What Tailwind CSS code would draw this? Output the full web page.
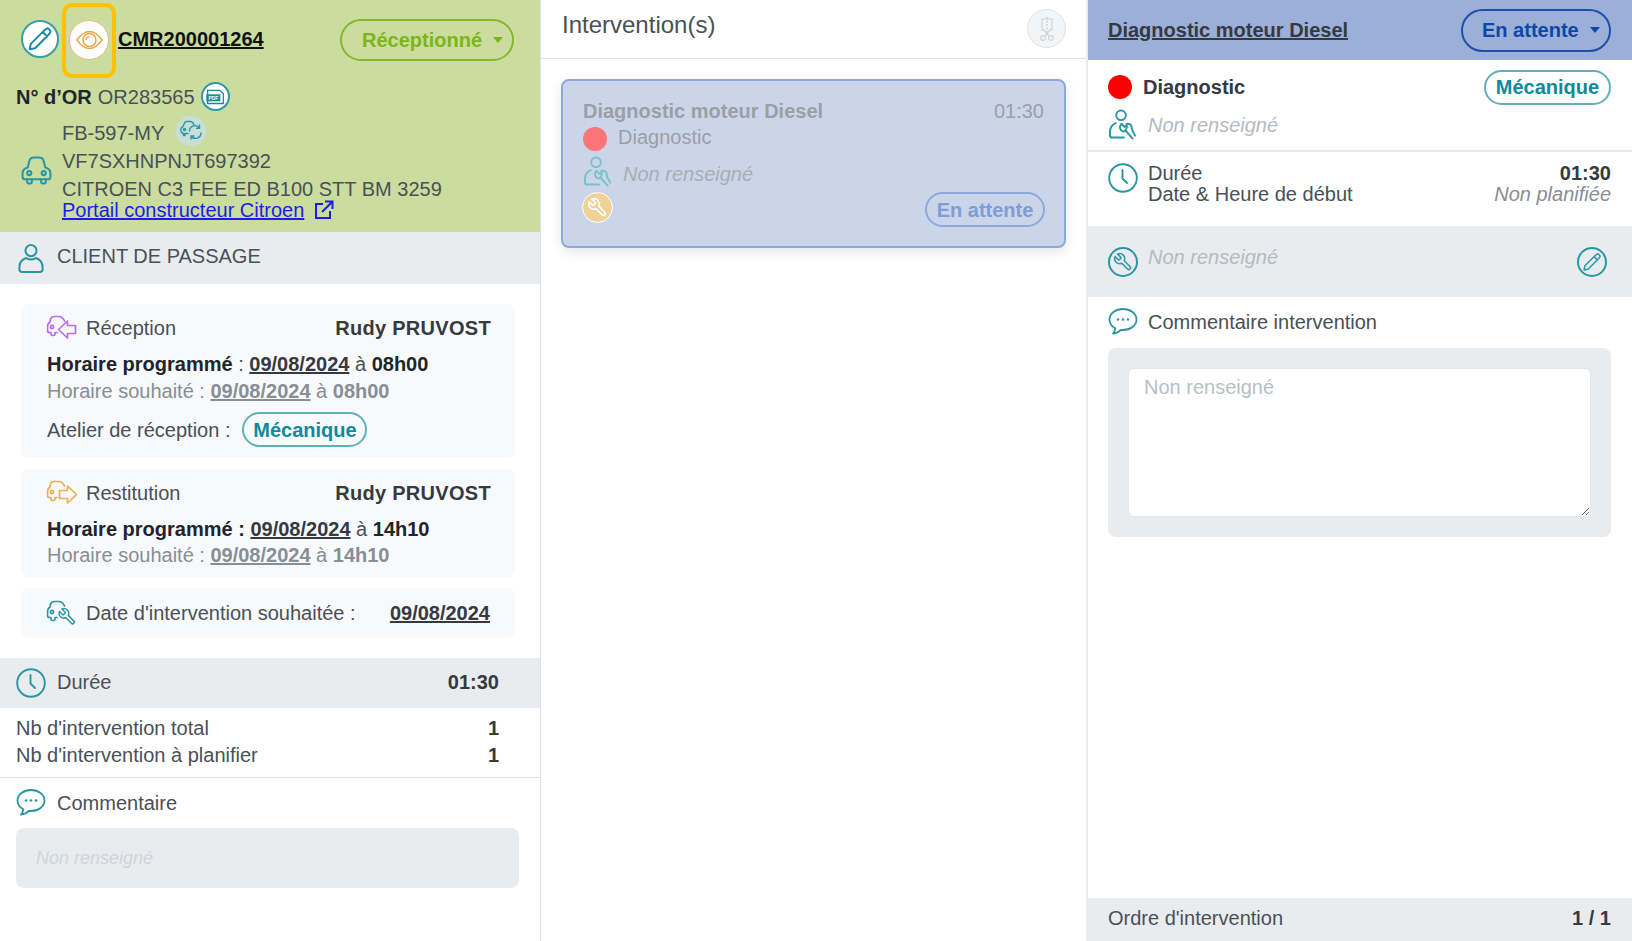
<!DOCTYPE html>
<html lang="fr">
<head>
<meta charset="utf-8">
<title>Intervention</title>
<script src="https://cdn.jsdelivr.net/npm/@tailwindcss/browser@4"></script>
</head>
<body class="bg-white font-['Liberation_Sans',Arial,sans-serif] text-[20px] text-[#495057]">

<!-- shared icons -->
<svg class="hidden">
  <symbol id="i-pencil" viewBox="0 0 24 24"><path d="M15.5 4.5 18 2.6a1.4 1.4 0 0 1 1.9.1l1.4 1.4a1.4 1.4 0 0 1 .1 1.9l-1.9 2.500L7.500 20.500 2.500 21.500l1-5ZM14.500 5.500l4 4" fill="none" stroke="currentColor" stroke-width="1.800" stroke-linejoin="round"/></symbol>
  <symbol id="i-wrench" viewBox="0 0 24 24"><g transform="translate(24 0) scale(-1 1)"><path d="M14.700 6.300a1 1 0 0 0 0 1.400l1.600 1.600a1 1 0 0 0 1.400 0l3.770-3.770a6 6 0 0 1-7.940 7.940l-6.910 6.910a2.120 2.120 0 0 1-3-3l6.910-6.910a6 6 0 0 1 7.940-7.940l-3.760 3.760z" fill="none" stroke="currentColor" stroke-width="1.800" stroke-linejoin="round"/></g></symbol>
  <symbol id="i-car" viewBox="0 0 30 30"><g fill="none" stroke="currentColor" stroke-width="2" stroke-linejoin="round" stroke-linecap="round"><path d="M6.500 12 8 6Q9 2.500 12.500 2.500h5Q21 2.500 22 6l1.500 6q5 1 5 6v3q0 2.500-2.500 2.500H4Q1.500 23.500 1.500 21v-3q0-5 5-6Z"/><path d="M6 23.500v2.500q0 1.500 1.500 1.500h1.500q1.500 0 1.500-1.500v-2.500M19.500 23.500v2.500q0 1.500 1.500 1.500h1.500q1.500 0 1.500-1.500v-2.500"/><circle cx="8" cy="17.500" r="2"/><circle cx="22" cy="17.500" r="2"/></g></symbol>
  <symbol id="i-person" viewBox="0 0 28 32"><g fill="none" stroke="currentColor" stroke-width="2.200"><circle cx="14" cy="7.500" r="6"/><path d="M9 15.500Q1.500 18 1.500 25.500v2q0 3 3 3h19q3 0 3-3v-2q0-7.500-7.500-10-5 3-10 0Z" stroke-linejoin="round"/></g></symbol>
  <symbol id="i-clock" viewBox="0 0 30 30"><g fill="none" stroke="currentColor" stroke-width="1.900" stroke-linecap="round"><circle cx="15" cy="15" r="13.800"/><path d="M14.500 7v8.500l4.500 4.500"/></g></symbol>
  <symbol id="i-comment" viewBox="0 0 30 30"><path d="M15 2C7.500 2 1.500 6.500 1.500 12.500c0 3.800 2.300 7 5.800 8.800-.2 2-1 3.800-2.300 5.200 3.200-.3 6-1.600 8-3.600.6.100 1.300.100 2 .100 7.500 0 13.500-4.700 13.500-10.500S22.500 2 15 2Z" fill="none" stroke="currentColor" stroke-width="1.800" stroke-linejoin="round"/><circle cx="10" cy="12.500" r="1.300" fill="currentColor"/><circle cx="15" cy="12.500" r="1.300" fill="currentColor"/><circle cx="20" cy="12.500" r="1.300" fill="currentColor"/></symbol>
  <symbol id="i-tech" viewBox="0 0 30 32"><g fill="none" stroke="currentColor" stroke-width="2" stroke-linecap="round" stroke-linejoin="round"><circle cx="13.500" cy="6.500" r="5"/><path d="M8 14.500Q2 17 2 24v3q0 2.500 2.500 2.500h12"/><path d="M14 15.500l3 3 2.500-1.500q.5 3-1.500 5l7.500 8.500M19 15.500q3-1 5 1.500.9 1.500.5 3.500l3.500 7"/><path d="M14 15.500q-3 3-.5 6.500 2.500 2.500 5 0"/></g></symbol>
  <symbol id="i-car-half" viewBox="0 0 22 24"><g fill="none" stroke="currentColor" stroke-width="1.700" stroke-linecap="round" stroke-linejoin="round"><path d="M18 6Q16 1.500 12 1.500H8Q5 1.500 4 4L3.500 7Q1 8.500 1 12v3.500q0 2 2 2h1.500v1.500q0 1.500 1.500 1.500h1q1.500 0 1.500-1.500v-1.500h2"/><circle cx="5.500" cy="12" r="1.600"/></g></symbol>
</svg>

<div class="flex h-[941px] w-[1632px] overflow-hidden">

  <!-- left column -->
  <aside class="w-[541px] shrink-0 border-r border-[#dee2e6] flex flex-col">
    <header class="h-[232px] bg-[#cbdc9f] flex flex-col">
      <div class="h-[77px] pt-[3px] flex items-start">
        <button class="ml-[21px] mt-[17px] size-[38px] rounded-full bg-white border-2 border-[#3c9ca8] text-[#1b8a9b] flex items-center justify-center">
          <svg class="size-[26px]"><use href="#i-pencil"/></svg>
        </button>
        <div class="ml-[3px] w-[54px] h-[75px] border-[4px] border-[#ffc000] rounded-[10px] pt-[13px] flex justify-center">
          <span class="size-[40px] rounded-full bg-white border border-[#e8bd7c] flex items-center justify-center text-[#e8a84e]">
            <svg class="w-[27px] h-[20px]" viewBox="0 0 27 20" fill="none" stroke="currentColor" stroke-width="1.500"><path d="M1 10Q7 1.500 13.500 1.500T26 10Q20 18.500 13.500 18.500T1 10Z"/><circle cx="13.500" cy="10" r="6.500"/><path d="M10 10a3.500 3.500 0 0 1 3.500-3.500"/></svg>
          </span>
        </div>
        <a class="ml-[2px] mt-[17px] h-[38px] leading-[38px] font-bold text-[#111] underline">CMR200001264</a>
        <div class="ml-auto mr-[26px] mt-[16px] w-[174px] h-[42px] rounded-full border-2 border-[#86b52f] flex items-center pl-[20px] pr-[9px]">
          <span class="font-bold text-[#7cb518]">Réceptionné</span>
          <span class="ml-auto size-0 border-x-[5px] border-t-[6px] border-x-transparent border-t-[#7cb518]"></span>
        </div>
      </div>
      <div class="mt-[5px] h-[29px] pl-[16px] flex items-center">
        <b class="text-[#212529]">N° d’OR</b>
        <span class="ml-[6px]">OR283565</span>
        <span class="ml-[6px] size-[29px] rounded-full bg-white border-2 border-[#2d98a8] flex items-center justify-center">
          <svg class="size-[21px]" viewBox="0 0 24 24"><path d="M3 5h14l4 4v11H3Z" fill="none" stroke="#1b8a9b" stroke-width="1.500"/><rect x="1.500" y="9.500" width="16" height="8" fill="#1b8a9b"/><text x="9.500" y="15.800" text-anchor="middle" font-size="5.500" font-weight="700" fill="#fff">PDF</text></svg>
        </span>
      </div>
      <div class="mt-[8px] flex">
        <svg class="ml-[21px] mt-[36px] w-[31px] h-[31px] shrink-0 text-[#2a96a3]"><use href="#i-car"/></svg>
        <div class="ml-[10px]">
          <div class="h-[28px] leading-[28px] flex">
            FB-597-MY
            <span class="ml-[12px] -mt-[3px] size-[30px] rounded-full bg-[#c6e0d8] flex items-center justify-center text-[#2a96a3]">
              <svg class="size-[24px]" viewBox="0 0 24 24" fill="none" stroke="currentColor" stroke-width="1.400" stroke-linecap="round"><path d="M9 14.500H6v2H4.500v-2Q2 14 2 11.500V9l2-1.500L5.500 4Q6 2.500 8 2.500h3q2 0 3 1.500l1 2"/><circle cx="5.500" cy="10.500" r="1"/><path d="M10.500 12a5.500 5.500 0 0 1 10-3M22 14a5.500 5.500 0 0 1-10 3M20.500 6v3.200h-3M12 20v-3h3"/></svg>
            </span>
          </div>
          <div class="h-[28px] leading-[28px]">VF7SXHNPNJT697392</div>
          <div class="h-[28px] leading-[28px]">CITROEN C3 FEE ED B100 STT BM 3259</div>
          <a class="h-[14px] leading-[14px] flex items-center text-[#1c1ce6]">
            <span class="underline">Portail constructeur Citroen</span>
            <svg class="ml-[10px] size-[20px] shrink-0" viewBox="0 0 20 20" fill="none" stroke="currentColor" stroke-width="2"><path d="M9 4H2v14h14v-7M11 1.500h7.500V9M18 2 8 12"/></svg>
          </a>
        </div>
      </div>
    </header>

    <div class="h-[52px] bg-[#e9ecef] flex items-center pl-[18px]">
      <svg class="w-[26px] h-[31px] text-[#2a96a3]"><use href="#i-person"/></svg>
      <span class="ml-[13px] -mt-[5px]">CLIENT DE PASSAGE</span>
    </div>

    <div class="pl-[21px] pr-[25px] pt-[20px] pb-[20px] flex flex-col gap-[11px]">
      <section class="h-[154px] rounded-[8px] bg-[#f8f9fa] pl-[25px] pr-[24px]">
        <div class="h-[48px] flex items-center">
          <svg class="w-[31px] h-[26px] text-[#b96cf0]" viewBox="0 0 30 26"><use href="#i-car-half" width="22" height="24"/><path d="M29 10.500H21V6L12 14.500 21 23V18.500H29Z" fill="none" stroke="currentColor" stroke-width="1.700" stroke-linejoin="round"/></svg>
          <span class="ml-[9px]">Réception</span>
          <b class="ml-auto text-[#343a40] tracking-[.3px]">Rudy PRUVOST</b>
        </div>
        <div class="ml-[1px] leading-[26px] -mt-[1px]"><b class="text-[#212529]">Horaire programmé</b> : <span class="underline font-bold text-[#343a40]">09/08/2024</span> à <b class="text-[#212529]">08h00</b></div>
        <div class="ml-[1px] leading-[26px] mt-[1px] text-[#868e96]">Horaire souhaité : <span class="underline font-bold">09/08/2024</span> à <b>08h00</b></div>
        <div class="ml-[1px] mt-[8px] flex items-center">
          Atelier de réception :
          <span class="ml-[12px] w-[125px] h-[35px] rounded-full border-2 border-[#5fb0bb] font-bold text-[#0f8a9b] flex items-center justify-center">Mécanique</span>
        </div>
      </section>

      <section class="h-[108px] rounded-[8px] bg-[#f8f9fa] pl-[25px] pr-[24px]">
        <div class="h-[48px] flex items-center">
          <svg class="w-[31px] h-[26px] text-[#ecb050]" viewBox="0 0 30 26"><use href="#i-car-half" width="22" height="24"/><path d="M13 10.500H21V6L30 14.500 21 23V18.500H13Z" fill="none" stroke="currentColor" stroke-width="1.700" stroke-linejoin="round"/></svg>
          <span class="ml-[9px] -mt-[1px]">Restitution</span>
          <b class="ml-auto -mt-[1px] text-[#343a40] tracking-[.3px]">Rudy PRUVOST</b>
        </div>
        <div class="ml-[1px] leading-[26px] -mt-[1px]"><b class="text-[#212529]">Horaire programmé :</b> <span class="underline font-bold text-[#343a40]">09/08/2024</span> à <b class="text-[#212529]">14h10</b></div>
        <div class="ml-[1px] leading-[26px] text-[#868e96]">Horaire souhaité : <span class="underline font-bold">09/08/2024</span> à <b>14h10</b></div>
      </section>

      <section class="h-[50px] rounded-[8px] bg-[#f8f9fa] pl-[25px] pr-[25px] flex items-center">
        <svg class="w-[31px] h-[26px] text-[#2a96a3]" viewBox="0 0 30 26"><use href="#i-car-half" width="22" height="24"/><g transform="translate(11 7) scale(.8)"><use href="#i-wrench" width="24" height="24"/></g></svg>
        <span class="ml-[9px] -mt-[1px]">Date d'intervention souhaitée :</span>
        <b class="ml-auto -mt-[1px] underline text-[#343a40]">09/08/2024</b>
      </section>
    </div>

    <div class="h-[50px] bg-[#e9ecef] flex items-center pl-[16px] pr-[41px]">
      <svg class="size-[30px] text-[#2a96a3]"><use href="#i-clock"/></svg>
      <span class="ml-[11px] -mt-[3px]">Durée</span>
      <b class="ml-auto -mt-[3px] text-[#343a40]">01:30</b>
    </div>

    <div class="h-[70px] border-b border-[#dee2e6] pt-[7px] pl-[16px] pr-[41px] leading-[26px]">
      <div class="flex justify-between"><span>Nb d'intervention total</span><b class="text-[#343a40]">1</b></div>
      <div class="flex justify-between mt-[1px]"><span>Nb d'intervention à planifier</span><b class="text-[#343a40]">1</b></div>
    </div>

    <div class="h-[50px] flex items-center pl-[16px]">
      <svg class="size-[30px] text-[#2a96a3]"><use href="#i-comment"/></svg>
      <span class="ml-[11px]">Commentaire</span>
    </div>
    <div class="ml-[16px] mr-[21px] h-[60px] rounded-[8px] bg-[#e9ecef] flex items-center pl-[20px] text-[18px] italic text-[#ced4da]">Non renseigné</div>
  </aside>

  <!-- middle column -->
  <main class="w-[545px] shrink-0">
    <div class="h-[59px] border-b border-[#dee2e6] flex items-center pl-[21px] pr-[20px]">
      <h2 class="-mt-[9px] text-[24px] text-[#495057]">Intervention(s)</h2>
      <span class="ml-auto -mt-[1px] size-[39px] rounded-full border border-[#dee2e6] bg-[#f3f4f5] flex items-center justify-center">
        <svg class="size-[26px] text-[#d0d4d8]" viewBox="0 0 26 26" fill="none" stroke="currentColor" stroke-width="1.200"><path d="M8 15V3h10v12"/><path d="M13 1v16" stroke="#a8d5dc" stroke-dasharray="2 1.500"/><path d="M9 13l6 7M17 13l-6 7"/><circle cx="9" cy="22" r="2.300"/><circle cx="17" cy="22" r="2.300"/></svg>
      </span>
    </div>
    <article class="relative ml-[20px] mr-[20px] mt-[20px] h-[169px] rounded-[8px] border-2 border-[#8da9dc] bg-[#cbd5ea] shadow-[0_4px_12px_rgba(0,0,0,0.1)] pl-[20px] pr-[20px] pt-[18px] text-[#9b9fa5]">
      <div class="flex justify-between leading-[24px]"><b>Diagnostic moteur Diesel</b><span>01:30</span></div>
      <div class="flex items-start mt-[2px]">
        <span class="mt-[2px] size-[24px] rounded-full bg-[#ff7478]"></span>
        <span class="ml-[11px] leading-[24px]">Diagnostic</span>
      </div>
      <div class="flex items-center mt-[5px] h-[31px]">
        <svg class="w-[29px] h-[31px] text-[#7cc0c4]"><use href="#i-tech"/></svg>
        <i class="ml-[11px] mt-[5px] text-[#a8adb3]">Non renseigné</i>
      </div>
      <span class="mt-[5px] -ml-[1px] size-[31px] rounded-full bg-[#efd298] border border-white flex items-center justify-center text-white">
        <svg class="size-[21px]"><use href="#i-wrench"/></svg>
      </span>
      <span class="absolute right-[19px] bottom-[19px] w-[120px] h-[35px] rounded-full border-2 border-[#8da9dc] font-bold text-[#7f9cd6] flex items-center justify-center">En attente</span>
    </article>
  </main>

  <!-- right column -->
  <section class="flex-1 border-l-2 border-[#e9ecef] flex flex-col">
    <div class="h-[60px] bg-[#9bafd9] flex items-center pl-[20px] pr-[21px]">
      <b class="underline text-[#343a40]">Diagnostic moteur Diesel</b>
      <div class="ml-auto w-[150px] h-[43px] rounded-full border-2 border-[#1f4fa8] flex items-center pl-[19px] pr-[9px]">
        <b class="text-[#0d47a8]">En attente</b>
        <span class="ml-auto size-0 border-x-[5px] border-t-[6px] border-x-transparent border-t-[#0d47a8]"></span>
      </div>
    </div>

    <div class="h-[92px] border-b-2 border-[#e9ecef] pl-[20px] pr-[21px] relative">
      <div class="pt-[9px] flex items-center h-[45px]">
        <span class="size-[24px] rounded-full bg-[#ff0000]"></span>
        <b class="ml-[11px] text-[#343a40]">Diagnostic</b>
        <span class="ml-auto w-[127px] h-[35px] rounded-full border-2 border-[#5fb0bb] font-bold text-[#0f8a9b] flex items-center justify-center">Mécanique</span>
      </div>
      <div class="flex items-center mt-[4px]">
        <svg class="w-[29px] h-[31px] text-[#2a96a3]"><use href="#i-tech"/></svg>
        <i class="ml-[11px] text-[#b4bac1]">Non renseigné</i>
      </div>
    </div>

    <div class="h-[74px] pl-[20px] pr-[21px] pt-[11px] flex">
      <svg class="size-[30px] text-[#2a96a3]"><use href="#i-clock"/></svg>
      <div class="ml-[10px] flex-1 leading-[21px]">
        <div class="flex justify-between"><span>Durée</span><b class="text-[#343a40]">01:30</b></div>
        <div class="flex justify-between"><span>Date &amp; Heure de début</span><i class="text-[#868e96]">Non planifiée</i></div>
      </div>
    </div>

    <div class="h-[71px] bg-[#e9ecef] pl-[20px] pr-[21px] flex items-center">
      <span class="size-[30px] rounded-full border-2 border-[#2a96a3] flex items-center justify-center text-[#2a96a3]">
        <svg class="size-[20px]"><use href="#i-wrench"/></svg>
      </span>
      <i class="ml-[10px] -mt-[9px] text-[#b4bac1]">Non renseigné</i>
      <span class="ml-auto mr-[4px] size-[30px] rounded-full border-2 border-[#2a96a3] flex items-center justify-center text-[#2a96a3]">
        <svg class="size-[20px]"><use href="#i-pencil"/></svg>
      </span>
    </div>

    <div class="h-[51px] pl-[20px] pb-[2px] flex items-center">
      <svg class="size-[30px] text-[#2a96a3]"><use href="#i-comment"/></svg>
      <span class="ml-[10px]">Commentaire intervention</span>
    </div>
    <div class="ml-[20px] mr-[21px] h-[189px] rounded-[8px] bg-[#e9ecef] px-[20px] pt-[20px] pb-[20px]">
      <textarea class="block w-full h-full rounded-[6px] bg-white border border-[#e3e6ea] px-[15px] py-[6px] text-[20px] leading-[24px] outline-none placeholder:text-[#b8bfc6]" placeholder="Non renseigné"></textarea>
    </div>

    <div class="mt-auto h-[43px] bg-[#e9ecef] flex items-center justify-between pl-[20px] pr-[21px] pb-[3px]">
      <span>Ordre d'intervention</span>
      <b class="text-[#343a40]">1 / 1</b>
    </div>
  </section>
</div>
</body>
</html>
